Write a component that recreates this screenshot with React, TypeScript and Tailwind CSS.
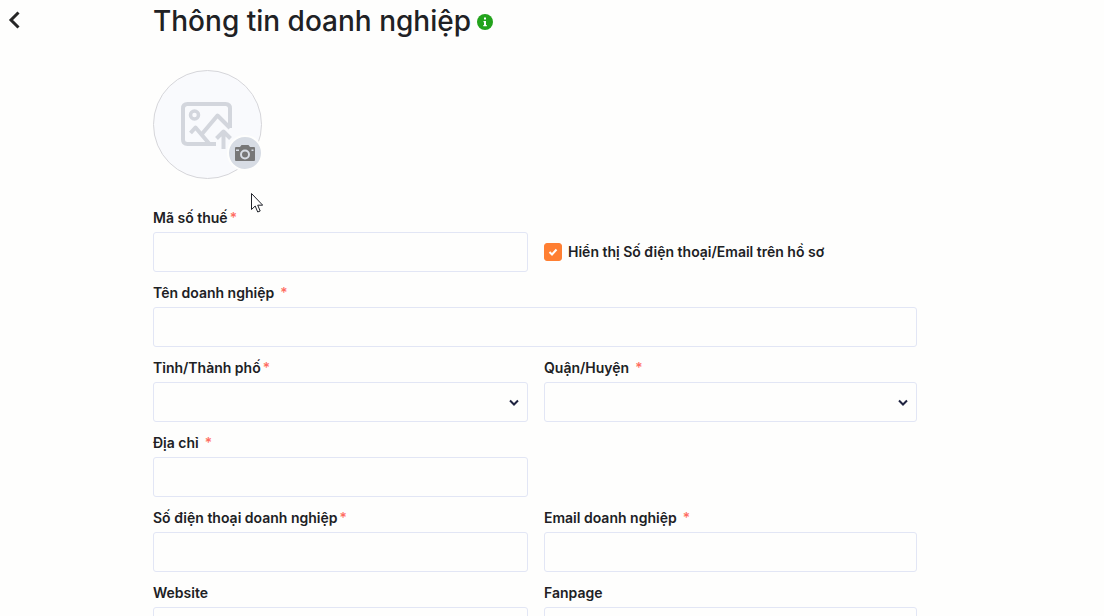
import { useState } from 'react';

function Label({ id, text, required, wide }: { id: string; text: string; required?: boolean; wide?: boolean }) {
  return (
    <label htmlFor={id} className="block h-7 text-sm leading-7 font-semibold whitespace-nowrap">
      {text}
      {required && <span className={`${wide ? 'ml-1.5' : 'ml-0.5'} font-medium text-[#ff6b60]`}>*</span>}
    </label>
  );
}

const box = 'block h-10 w-full rounded-[3px] border border-[#e2e6f5] bg-transparent px-3 text-sm outline-none focus:border-[#ff7f32]';

function TextField({ id, label, required, wide, type = 'text' }: any) {
  return (
    <div>
      <Label id={id} text={label} required={required} wide={wide} />
      <input id={id} type={type} required={required} className={box} />
    </div>
  );
}

function SelectField({ id, label, required, wide }: any) {
  return (
    <div>
      <Label id={id} text={label} required={required} wide={wide} />
      <div className="relative">
        <select id={id} required={required} className={`${box} appearance-none`}>
          <option value=""></option>
        </select>
        <svg className="pointer-events-none absolute top-[17px] right-2 h-2 w-3" viewBox="0 0 12 8" fill="none" stroke="#1f2340" strokeWidth="2">
          <path d="M2 1.5 6 5.5 10 1.5" />
        </svg>
      </div>
    </div>
  );
}

function AvatarPicker() {
  return (
    <div className="relative mt-7 size-[109px] rounded-full border border-[#d6d6da] bg-[#f9fafd]">
      <svg className="absolute top-[30px] left-[26px] h-[50px] w-[54px]" viewBox="0 0 54 50" fill="none" stroke="#d3d6dd" strokeWidth="4" strokeLinejoin="round">
        <path d="M36 43H7.500C4.500 43 3 41.500 3 38.500V7.500C3 4.500 4.500 3 7.500 3H45.500C48.500 3 50 4.500 50 7.500V27" />
        <circle cx="14.500" cy="14" r="4" strokeWidth="3.500" />
        <path d="M10.500 32 15.500 26.500 29.500 43" />
        <path d="M21.500 33.500 37.500 14.500 50 27" />
        <path d="M43.500 48V32M36.500 37.500 43.500 30.500 50.500 37.500" />
      </svg>
      <button type="button" aria-label="Đổi ảnh" className="absolute right-[-2px] bottom-[7px] flex size-9 items-center justify-center rounded-full border-2 border-[#fefefd] bg-[#d7dce4]">
        <svg className="h-[17px] w-5" viewBox="0 0 20 17">
          <path fill="#777" d="M1 2h4l1.500-2h7L15 2h4q1 0 1 1v12q0 1-1 1H1q-1 0-1-1V3q0-1 1-1z" />
          <circle cx="10" cy="9.500" r="4" fill="none" stroke="#d7dce4" strokeWidth="2" />
          <path fill="#d7dce4" d="M1 4.500h3V6H1zM16.500 4.500h2V6h-2z" />
        </svg>
      </button>
    </div>
  );
}

export default function App() {
  const [showContact, setShowContact] = useState(true);

  return (
    <main className="relative h-screen overflow-hidden bg-[#fefefd] font-['Inter','Open_Sans',sans-serif] text-[#202124]">
      <button type="button" aria-label="Quay lại" className="absolute top-2.5 left-2 h-5 w-3">
        <svg viewBox="0 0 12 20" fill="none" stroke="#262626" strokeWidth="3">
          <path d="M10.500 2.500 3 10l7.500 7.500" />
        </svg>
      </button>

      <form className="pr-[187px] pl-[153px]">
        <header className="flex h-[42px] items-center gap-1.5">
          <h1 className="text-[28px] leading-10 font-medium whitespace-nowrap">Thông tin doanh nghiệp</h1>
          <svg className="mt-0.5 size-4 shrink-0" viewBox="0 0 16 16">
            <circle cx="8" cy="8" r="8" fill="#23a31c" />
            <path fill="#fff" d="M7 3.500h2v2H7zM6.500 7H9v4h.8v1.300H6.300V11H7V8.200h-.5z" />
          </svg>
        </header>

        <AvatarPicker />

        <div className="mt-[25px] grid grid-cols-[375fr_373fr] gap-x-4 gap-y-[7px]">
          <TextField id="tax" label="Mã số thuế" required />
          <div className="flex items-center gap-1.5 pt-7">
            <span className="relative size-[18px] shrink-0">
              <input
                id="show"
                type="checkbox"
                checked={showContact}
                onChange={(e) => setShowContact(e.target.checked)}
                className="peer block size-[18px] appearance-none rounded-[3px] border border-[#ff7f32] checked:bg-[#ff7f32]"
              />
              <svg className="pointer-events-none absolute inset-0 hidden peer-checked:block" viewBox="0 0 18 18" fill="none" stroke="#fff" strokeWidth="2">
                <path d="M5.500 9 8 11.500 12.500 6.500" />
              </svg>
            </span>
            <label htmlFor="show" className="text-sm leading-7 font-semibold whitespace-nowrap">Hiển thị Số điện thoại/Email trên hồ sơ</label>
          </div>
          <div className="col-span-2">
            <TextField id="name" label="Tên doanh nghiệp" required wide />
          </div>
          <SelectField id="province" label="Tỉnh/Thành phố" required />
          <SelectField id="district" label="Quận/Huyện" required wide />
          <TextField id="address" label="Địa chỉ" required wide />
          <div />
          <TextField id="phone" label="Số điện thoại doanh nghiệp" required type="tel" />
          <TextField id="email" label="Email doanh nghiệp" required wide type="email" />
          <TextField id="website" label="Website" />
          <TextField id="fanpage" label="Fanpage" />
        </div>
      </form>

      {/* mouse pointer */}
      <svg className="pointer-events-none absolute top-[193px] left-[251px] h-5 w-3" viewBox="0 0 12 20">
        <path fill="#fff" stroke="#20232a" d="M.5.500v16l3.700-3.500 2.500 6 2.500-1-2.500-5.800h5z" />
      </svg>
    </main>
  );
}
